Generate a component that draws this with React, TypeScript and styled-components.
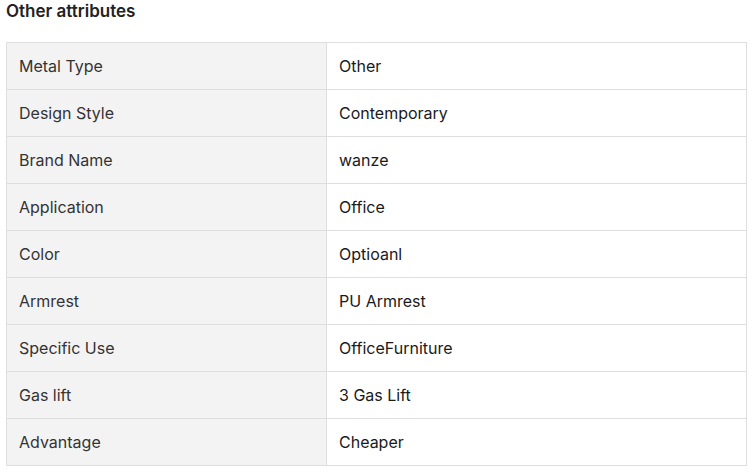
import React from "react";
import styled, { createGlobalStyle } from "styled-components";

const Global = createGlobalStyle`
  body { margin: 0; background: #fff; font-family: Inter, "Noto Sans", sans-serif; }
`;

const Wrap = styled.div`
  padding: 0 10px 0 6px;
`;

const Title = styled.h3`
  margin: 0 0 20px;
  font-size: 17px;
  line-height: 22px;
  font-weight: 600;
  color: #222;
`;

const Table = styled.table`
  width: 741px;
  border-collapse: collapse;
  font-size: 16px;
`;

const Cell = styled.td<{ $label?: boolean }>`
  height: 47px;
  padding: 0 12px;
  border: 1px solid #dedede;
  box-sizing: border-box;
  vertical-align: middle;
  background: ${(p) => (p.$label ? "#f3f3f3" : "#fff")};
  color: ${(p) => (p.$label ? "#333" : "#1a1a1a")};
  font-weight: 400;
  width: ${(p) => (p.$label ? "320px" : "auto")};
`;

const rows: [string, string][] = [
  ["Metal Type", "Other"],
  ["Design Style", "Contemporary"],
  ["Brand Name", "wanze"],
  ["Application", "Office"],
  ["Color", "Optioanl"],
  ["Armrest", "PU Armrest"],
  ["Specific Use", "OfficeFurniture"],
  ["Gas lift", "3 Gas Lift"],
  ["Advantage", "Cheaper"],
];

export default function App() {
  return (
    <Wrap>
      <Global />
      <Title>Other attributes</Title>
      <Table>
        <tbody>
          {rows.map(([k, v]) => (
            <tr key={k}>
              <Cell $label>{k}</Cell>
              <Cell>{v}</Cell>
            </tr>
          ))}
        </tbody>
      </Table>
    </Wrap>
  );
}
